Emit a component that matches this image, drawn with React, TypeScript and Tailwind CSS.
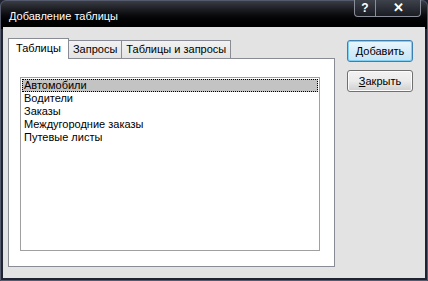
const items = ['Автомобили', 'Водители', 'Заказы', 'Междугородние заказы', 'Путевые листы'];

const font = { fontFamily: '"Liberation Sans", Arial, sans-serif' };

function Tab({ label, active }: { label: string; active?: boolean }) {
  if (active) {
    return (
      <div className="relative z-10 -mb-px flex h-[21px] items-center border border-b-0 border-[#898c95] bg-white px-[7px] pb-[2px] text-[11px] text-black">
        {label}
      </div>
    );
  }
  return (
    <div className="-ml-px flex h-[18px] items-center border border-b-0 border-[#898c95] bg-gradient-to-b from-[#f2f2f2] to-[#e3e3e3] px-[4px] text-[11px] text-black first:ml-0">
      {label}
    </div>
  );
}

function DlgButton({ children, primary }: { children: React.ReactNode; primary?: boolean }) {
  return (
    <div
      className={
        'flex h-[22px] w-[66px] items-center justify-center rounded-[3px] border text-[11px] text-black ' +
        (primary
          ? 'border-[#3c7fb1] bg-gradient-to-b from-[#eaf6fd] to-[#c4e5f6] shadow-[inset_0_0_0_1px_#7fd0f3]'
          : 'border-[#707070] bg-gradient-to-b from-[#f2f2f2] via-[#ebebeb] to-[#cfcfcf] shadow-[inset_0_0_0_1px_#fcfcfc]')
      }
    >
      {children}
    </div>
  );
}

export default function App() {
  return (
    <div className="h-[281px] w-[428px] overflow-hidden bg-[#202432]" style={font}>
      <div className="flex h-[281px] flex-col rounded-t-[6px] border border-[#555b6c] bg-gradient-to-b from-[#3a3d45] via-[#0b0b0e] to-[#000000] bg-[length:100%_28px] bg-no-repeat">
        {/* Title bar */}
        <div className="flex h-[26px] shrink-0 items-start">
          <span className="ml-[8px] mt-[8px] text-[11px] leading-[14px] text-white">Добавление таблицы</span>
          <div className="ml-auto mr-[6px] flex h-[17px] -mt-px">
            <div className="flex w-[22px] items-center justify-center rounded-bl-[4px] border border-t-0 border-[#8a8e99] bg-gradient-to-b from-[#3e424c] to-[#1b1d24] text-[12px] font-bold text-white">
              ?
            </div>
            <div className="-ml-px flex w-[46px] items-center justify-center rounded-br-[4px] border border-t-0 border-[#8a8e99] bg-gradient-to-b from-[#3e424c] to-[#1b1d24] text-[13px] font-bold text-white">
              ✕
            </div>
          </div>
        </div>

        {/* Client area */}
        <div className="mx-[2px] mb-[2px] flex flex-1 bg-[#e3e3e3] pl-[5px] pr-[11px]">
          <div className="flex w-[327px] flex-col pt-[11px] pb-[11px]">
            <div className="flex items-end">
              <Tab label="Таблицы" active />
              <Tab label="Запросы" />
              <Tab label="Таблицы и запросы" />
            </div>
            <div className="flex flex-1 border border-[#898c95] bg-white pl-[11px] pr-[14px] pt-[18px] pb-[15px]">
              <div className="flex-1 border border-[#a0a0a0] bg-white p-px">
                {items.map((it, i) => (
                  <div
                    key={it}
                    className={
                      'h-[13px] pl-[2px] text-[11px] leading-[13px] text-black ' +
                      (i === 0 ? 'bg-[#c3c3c3] outline-1 outline-dotted outline-[#000] -outline-offset-1' : '')
                    }
                  >
                    {it}
                  </div>
                ))}
              </div>
            </div>
          </div>
          <div className="ml-[12px] flex flex-col gap-[8px] pt-[13px]">
            <DlgButton primary>
              <span><span className="underline">Д</span>обавить</span>
            </DlgButton>
            <DlgButton>
              <span><span className="underline">З</span>акрыть</span>
            </DlgButton>
          </div>
        </div>
      </div>
    </div>
  );
}
